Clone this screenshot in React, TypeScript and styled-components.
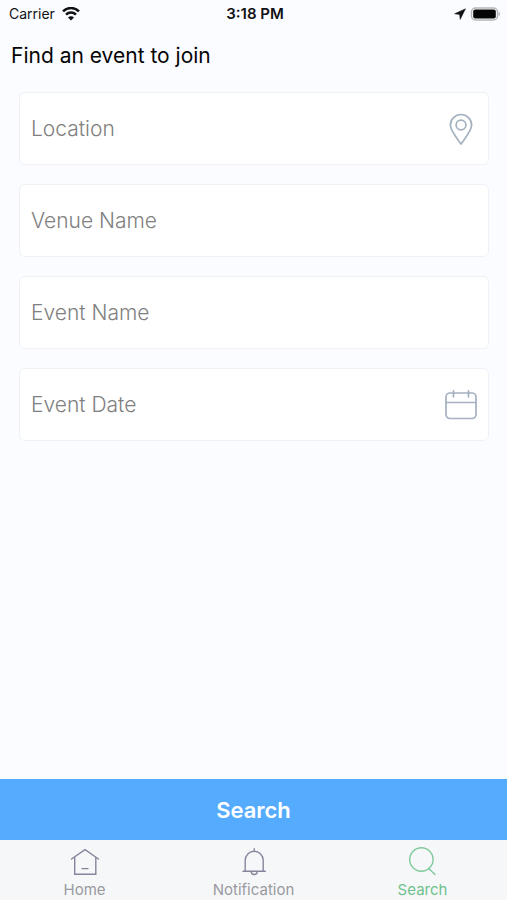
import React from "react";
import styled, { createGlobalStyle } from "styled-components";

const GlobalStyle = createGlobalStyle`
  *, *::before, *::after { box-sizing: border-box; }
  body {
    margin: 0;
    background: #fbfcff;
    color: #111214;
    font-family: Inter, "Open Sans", sans-serif;
  }
`;

const Screen = styled.div`
  display: flex;
  flex-direction: column;
  min-height: 100vh;
`;

const StatusBar = styled.header`
  display: grid;
  grid-template-columns: 1fr auto 1fr;
  align-items: center;
  height: 28px;
  padding: 0 6px 0 9px;
  font-size: 14px;
  line-height: 20px;
`;

const StatusGroup = styled.div<{ $end?: boolean }>`
  display: flex;
  align-items: center;
  justify-content: ${(p) => (p.$end ? "flex-end" : "flex-start")};
  gap: ${(p) => (p.$end ? "4px" : "7px")};
`;

const Time = styled.time`
  font-size: 15px;
  font-weight: 600;
`;

const Form = styled.form`
  display: flex;
  flex: 1;
  flex-direction: column;
`;

const Title = styled.h1`
  margin: 0;
  padding: 16px 11px 0;
  color: #050506;
  font-size: 21px;
  font-weight: 400;
  line-height: 24px;
`;

const Fields = styled.div`
  display: flex;
  flex: 1;
  flex-direction: column;
  gap: 19px;
  padding: 24px 18px 24px 19px;
`;

const Field = styled.label`
  display: flex;
  align-items: center;
  height: 73px;
  padding: 0 11px;
  background: #ffffff;
  border: 1px solid #eff1f6;
  border-radius: 6px;

  &:focus-within {
    border-color: #55acff;
  }
`;

const TextInput = styled.input`
  flex: 1;
  min-width: 0;
  padding: 0;
  border: 0;
  outline: 0;
  background: transparent;
  color: #222222;
  font-family: inherit;
  font-size: 21px;
  font-weight: 300;
  line-height: 24px;

  &::placeholder {
    color: #808080;
    opacity: 1;
  }
`;

const FieldIcon = styled.svg`
  flex: none;
  width: 32px;
  height: 32px;
  fill: none;
  stroke: #a5b1c0;
  stroke-width: 1.7;
  stroke-linecap: round;
  stroke-linejoin: round;
`;

const SubmitButton = styled.button`
  height: 61px;
  padding: 0;
  border: 0;
  background: #55acff;
  color: #ffffff;
  font-family: inherit;
  font-size: 22px;
  font-weight: 600;
  line-height: 28px;
  cursor: pointer;
`;

const TabBar = styled.nav`
  display: grid;
  grid-template-columns: repeat(3, 1fr);
  height: 60px;
  background: #f6f7f9;
`;

const Tab = styled.a<{ $active?: boolean }>`
  display: flex;
  flex-direction: column;
  align-items: center;
  gap: 2px;
  padding-top: 6px;
  color: ${(p) => (p.$active ? "#6fc18d" : "#999a9e")};
  font-size: 15px;
  line-height: 20px;
  text-decoration: none;
`;

const TabIcon = styled.svg<{ $active?: boolean }>`
  width: 32px;
  height: 32px;
  fill: none;
  stroke: ${(p) => (p.$active ? "#7fc99a" : "#85859d")};
  stroke-width: 1.4;
  stroke-linecap: round;
  stroke-linejoin: miter;
`;

const WifiIcon = () => (
  <svg width="18" height="14" viewBox="0 0 18 14" fill="none" stroke="#111214" strokeWidth="2.5" aria-hidden="true">
    <path d="M1 4.4C5.4-.1 12.6-.1 17 4.4" />
    <path d="M4 7.6c2.8-2.8 7.2-2.8 10 0" />
    <path d="M9 13.6 6 10.5c1.6-1.6 4.4-1.6 6 0Z" fill="#111214" stroke="none" />
  </svg>
);

const LocationArrow = () => (
  <svg width="12" height="12" viewBox="0 0 12 12" fill="#111214" aria-hidden="true">
    <path d="M11.5.8.6 5.8l5 .8.6 4.8Z" stroke="#111214" strokeWidth=".5" strokeLinejoin="round" />
  </svg>
);

const BatteryIcon = () => (
  <svg width="31" height="14" viewBox="0 0 31 14" aria-hidden="true">
    <rect x="1.5" y="1" width="26" height="12" rx="4" fill="#ffffff" stroke="#b5b7ba" strokeWidth="1.5" />
    <rect x="3.2" y="2.6" width="22.6" height="8.8" rx="2" fill="#050505" />
    <path d="M28.6 4.8c2 .8 2 3.6 0 4.4Z" fill="#b5b7ba" />
  </svg>
);

const PinIcon = () => (
  <FieldIcon viewBox="0 0 32 32" aria-hidden="true">
    <path d="M16 31C12.7 26.2 5.4 18 5.4 12.1a10.6 10.6 0 0 1 21.2 0C26.6 18 19.3 26.2 16 31Z" />
    <circle cx="16" cy="12" r="4.9" />
  </FieldIcon>
);

const CalendarIcon = () => (
  <FieldIcon viewBox="0 0 32 32" aria-hidden="true">
    <rect x="1" y="4" width="30" height="25.5" rx="4" />
    <path d="M1 13.5h30M8.5 1.8v6M23.5 1.8v6" />
  </FieldIcon>
);

const HomeIcon = () => (
  <TabIcon viewBox="0 0 32 32" aria-hidden="true">
    <path d="M2.5 13 16 3.7 29.5 13M5.7 11.2V28.2h21.1V11.2M13 22.6h6" />
  </TabIcon>
);

const BellIcon = () => (
  <TabIcon viewBox="0 0 32 32" aria-hidden="true">
    <path d="M5 25.2h22.3M7.2 25V14.3a9 9 0 0 1 18 0V25M16.2 2.7v2.5M13.2 25.5a3 3 0 0 0 6 0" />
  </TabIcon>
);

const SearchIcon = () => (
  <TabIcon $active viewBox="0 0 32 32" aria-hidden="true">
    <circle cx="14.4" cy="13.5" r="11.7" />
    <path d="m21.8 22.4 6.2 6.2" />
  </TabIcon>
);

const fields = [
  { name: "location", label: "Location", icon: <PinIcon /> },
  { name: "venue", label: "Venue Name" },
  { name: "event", label: "Event Name" },
  { name: "date", label: "Event Date", icon: <CalendarIcon /> },
];

export default function App() {
  return (
    <>
      <GlobalStyle />
      <Screen>
        <StatusBar>
          <StatusGroup>
            <span>Carrier</span>
            <WifiIcon />
          </StatusGroup>
          <Time>3:18 PM</Time>
          <StatusGroup $end>
            <LocationArrow />
            <BatteryIcon />
          </StatusGroup>
        </StatusBar>
        <Form onSubmit={(e: React.FormEvent) => e.preventDefault()}>
          <Title>Find an event to join</Title>
          <Fields>
            {fields.map((f) => (
              <Field key={f.name}>
                <TextInput name={f.name} type="text" placeholder={f.label} aria-label={f.label} />
                {f.icon}
              </Field>
            ))}
          </Fields>
          <SubmitButton type="submit">Search</SubmitButton>
        </Form>
        <TabBar>
          <Tab href="#home">
            <HomeIcon />
            Home
          </Tab>
          <Tab href="#notification">
            <BellIcon />
            Notification
          </Tab>
          <Tab href="#search" $active aria-current="page">
            <SearchIcon />
            Search
          </Tab>
        </TabBar>
      </Screen>
    </>
  );
}
